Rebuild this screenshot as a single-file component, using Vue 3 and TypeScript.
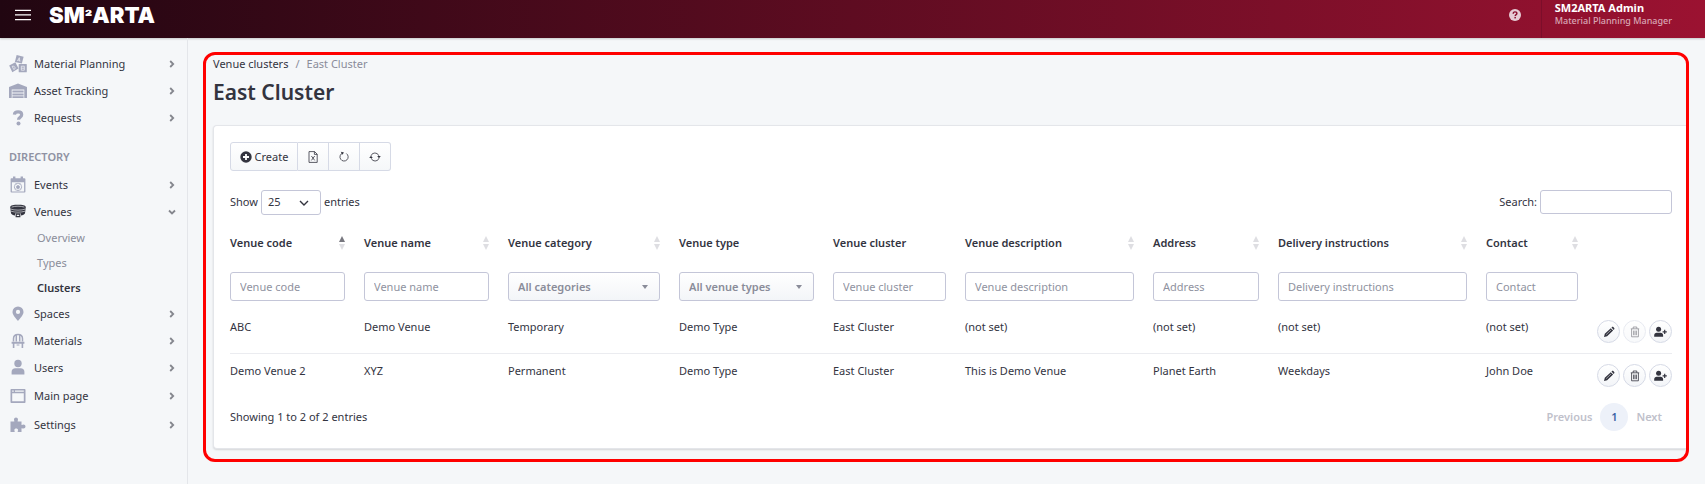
<script setup lang="ts">
import { ref } from 'vue'

interface NavItem {
  label: string
  icon: string
  open?: boolean
  tall?: boolean
}
interface Column {
  key: string
  label: string
  width: number
  sort: '' | 'both' | 'asc'
  options?: string
}
interface Venue {
  cells: string[]
  locked: boolean
}

const topItems: NavItem[] = [
  { label: 'Material Planning', icon: 'blocks' },
  { label: 'Asset Tracking', icon: 'warehouse' },
  { label: 'Requests', icon: 'question' },
]
const directoryItems: NavItem[] = [
  { label: 'Events', icon: 'calendar' },
  { label: 'Venues', icon: 'stadium', open: true },
  { label: 'Spaces', icon: 'pin' },
  { label: 'Materials', icon: 'chair' },
  { label: 'Users', icon: 'user' },
  { label: 'Main page', icon: 'window', tall: true },
  { label: 'Settings', icon: 'puzzle', tall: true },
]
const groups = [
  { title: '', items: topItems },
  { title: 'DIRECTORY', items: directoryItems },
]
const venueLinks = ['Overview', 'Types', 'Clusters']

const columns: Column[] = [
  { key: 'code', label: 'Venue code', width: 134, sort: 'asc' },
  { key: 'name', label: 'Venue name', width: 144, sort: 'both' },
  { key: 'category', label: 'Venue category', width: 171, sort: 'both', options: 'All categories' },
  { key: 'type', label: 'Venue type', width: 154, sort: '', options: 'All venue types' },
  { key: 'cluster', label: 'Venue cluster', width: 132, sort: '' },
  { key: 'description', label: 'Venue description', width: 188, sort: 'both' },
  { key: 'address', label: 'Address', width: 125, sort: 'both' },
  { key: 'delivery', label: 'Delivery instructions', width: 208, sort: 'both' },
  { key: 'contact', label: 'Contact', width: 111, sort: 'both' },
]
const venues: Venue[] = [
  {
    cells: ['ABC', 'Demo Venue', 'Temporary', 'Demo Type', 'East Cluster', '(not set)', '(not set)', '(not set)', '(not set)'],
    locked: true,
  },
  {
    cells: ['Demo Venue 2', 'XYZ', 'Permanent', 'Demo Type', 'East Cluster', 'This is Demo Venue', 'Planet Earth', 'Weekdays', 'John Doe'],
    locked: false,
  },
]
const pageSize = ref('25')
const search = ref('')
</script>

<template>
  <div class="page">
    <header class="topbar">
      <button class="burger" type="button" aria-label="Toggle menu">
        <svg viewBox="0 0 16 12" width="16" height="12" stroke="#fff" stroke-width="1.300">
          <path d="M0 1.300h16M0 5.800h16M0 10.700h16" />
        </svg>
      </button>
      <a class="logo" href="#">SM<span>²</span>ARTA</a>
      <a class="help" href="#" aria-label="Help">
        <svg viewBox="0 0 12 12" width="12" height="12">
          <circle cx="6" cy="6" r="6" fill="#e6cdd5" />
          <path d="M4.200 4.700C4.200 3.500 5 2.900 6 2.900s1.900.6 1.900 1.600C7.900 5.700 6.200 5.600 6.200 7" fill="none" stroke="#880f2d" stroke-width="1.400" />
          <rect x="5.400" y="7.900" width="1.500" height="1.500" fill="#880f2d" />
        </svg>
      </a>
      <div class="account">
        <strong>SM2ARTA Admin</strong>
        <span>Material Planning Manager</span>
      </div>
    </header>

    <div class="body">
      <nav class="sidebar" aria-label="Main">
        <template v-for="group in groups" :key="group.title">
          <h2 v-if="group.title">{{ group.title }}</h2>
          <ul>
            <li v-for="item in group.items" :key="item.label">
              <a class="item" :class="{ open: item.open, tall: item.tall }" href="#">
                <svg class="icon" viewBox="0 0 18 18" width="18" height="18" fill="currentColor">
                  <g v-if="item.icon === 'blocks'">
                    <path d="M7.600.1l7 1.700-1.700 6.800-7-1.700z" />
                    <path d="M.2 10.400l6.200-3.200 3.100 6.400-6.200 3.600z" />
                    <rect x="9.700" y="8.900" width="8.100" height="8.400" rx=".6" />
                    <path d="M8.400 6l1.900-3.300.6 3.900M9 5l1.700.4M3.200 11.300l1.600 3.300c2.200-.6 1.600-4-1.600-3.300zM12.300 11.200v4h3v-4zM12.300 13.200h3" fill="none" stroke="#f5f7f9" stroke-width=".7" />
                  </g>
                  <g v-else-if="item.icon === 'warehouse'">
                    <path d="M-.5 5.200L9 1.600l9.500 3.600V16h-3.200V7.600H2.700V16H-.5z" />
                    <path d="M3.400 8.600h11.200v2H3.400zM3.400 11.400h11.200v2H3.400zM3.400 14.200h11.200V16H3.400z" />
                  </g>
                  <g v-else-if="item.icon === 'question'">
                    <path d="M5.400 5.600C5.600 3.600 7 2.900 9.100 2.900s3.600 1 3.600 2.800c0 2.500-3.200 2.400-3.200 5.100" fill="none" stroke="currentColor" stroke-width="3.200" />
                    <circle cx="9.500" cy="14.400" r="2" />
                  </g>
                  <g v-else-if="item.icon === 'calendar'">
                    <path fill-rule="evenodd" d="M2.800 2.200H4V.6h2.400v1.600h5.200V.6H14v1.600h1.200c.8 0 1.200.300 1.200.8v12.700c0 .5-.3.800-.8.800H2.400c-.5 0-.8-.3-.8-.8V3c0-.5.3-.8 1.200-.8zM2.900 6.300v9.100h12.200V6.300z" />
                    <circle cx="9" cy="10.900" r="3.700" fill="none" stroke="currentColor" stroke-width=".8" />
                    <path d="M9 9.300l1.700 1.200-.6 1.900H7.900l-.6-1.900zM6.500 7.900l1.300.2M11.500 7.900l-1.300.2M5.400 11.500l1 1M12.600 11.500l-1 1M9 14.600v-1" stroke="currentColor" stroke-width=".7" />
                  </g>
                  <g v-else-if="item.icon === 'stadium'">
                    <path d="M1.200 4.300C1.200 2.400 4.800 1.800 9 1.800s7.800.6 7.800 2.500L16 10.200c-.3 1.300-2.300 2-4 2.200v-2H6v2c-1.700-.2-3.700-.9-4-2.200z" />
                    <path d="M2.600 4.100c3.500-1.200 9.300-1.200 12.800 0M1.500 6c4 1.500 11 1.500 15 0M2 8.200c4 1.300 10 1.300 14 0" fill="none" stroke="#f5f7f9" stroke-width=".6" />
                    <path d="M7.200 11.200h3.600v2.400H7.200z" fill="none" stroke="currentColor" stroke-width="1.200" />
                  </g>
                  <path v-else-if="item.icon === 'pin'" fill-rule="evenodd" d="M9 1.500a5.500 5.500 0 0 1 5.500 5.500c0 3-3.500 6.400-5.500 9C7 13.400 3.500 10 3.500 7A5.500 5.500 0 0 1 9 1.500zM9 4.800a2.100 2.100 0 1 0 0 4.200 2.100 2.100 0 0 0 0-4.200z" />
                  <g v-else-if="item.icon === 'chair'">
                    <path d="M4.500 9.500V6.800C4.500 3.800 6.300 2.600 9 2.600s4.500 1.200 4.500 4.200v2.700M7.300 9.500V3.500M10.700 9.500V3.500" fill="none" stroke="currentColor" stroke-width="1.500" />
                    <path d="M2.600 9.800h12.800v2H2.600zM3.800 11.800h1.600V16H3.800zM12.600 11.800h1.600V16h-1.600zM7.600 12.600h2.800v1H7.600z" />
                  </g>
                  <g v-else-if="item.icon === 'user'">
                    <circle cx="9" cy="4.500" r="3.700" />
                    <path d="M2.600 15.400v-2.700c0-2.200 1.500-3.500 3.700-3.500h5.400c2.200 0 3.700 1.300 3.700 3.500v2.700z" />
                  </g>
                  <path v-else-if="item.icon === 'window'" fill-rule="evenodd" d="M2.500 2h13c.6 0 1 .4 1 1v12c0 .6-.4 1-1 1h-13c-.6 0-1-.4-1-1V3c0-.6.4-1 1-1zM3.200 6.300v8h11.600v-8zM3.200 3.500v1.300h1.500V3.500zM6 3.500v1.300h8.800V3.500z" />
                  <path v-else d="M1.500 5.500h3.700c.5-.4-.2-1-.2-2 0-1.200.9-2 2-2s2 .8 2 2c0 1-.7 1.600-.2 2h3.700v3.300c.5.6 1.100-.2 2-.2 1.100 0 2 .9 2 2s-.9 2-2 2c-.9 0-1.500-.8-2-.2V16H8.900c-.6-.5.2-1.100.2-1.900 0-1-.9-1.600-1.900-1.600s-1.900.6-1.900 1.600c0 .8.800 1.400.2 1.900h-4z" />
                </svg>
                <span>{{ item.label }}</span>
                <svg class="chev" viewBox="0 0 8 8" width="8" height="8" fill="none" stroke="#85878e" stroke-width="1.800">
                  <path :d="item.open ? 'M1 2.500l3 3 3-3' : 'M2.200 1l3 3-3 3'" />
                </svg>
              </a>
              <ul v-if="item.open" class="sub">
                <li v-for="link in venueLinks" :key="link">
                  <a href="#" :class="{ current: link === 'Clusters' }">{{ link }}</a>
                </li>
              </ul>
            </li>
          </ul>
        </template>
      </nav>

      <main class="content">
        <nav class="crumbs" aria-label="Breadcrumb">
          <a href="#">Venue clusters</a><i>/</i><span>East Cluster</span>
        </nav>
        <h1>East Cluster</h1>

        <section class="card">
          <div class="toolbar">
            <button class="create" type="button">
              <svg viewBox="0 0 12 12" width="12" height="12">
                <circle cx="6" cy="6" r="5.700" fill="#33343f" />
                <path d="M6 3v6M3 6h6" stroke="#fff" stroke-width="1.800" />
              </svg>
              Create
            </button>
            <button type="button" aria-label="Export to Excel">
              <svg viewBox="0 0 12 12" width="12" height="12" fill="none" stroke="#33343f" stroke-width=".8">
                <path d="M2 .6h5.600L10.200 3.200v8.200H2zM7.400.6v2.800h2.800M4.400 5l3.300 4.400M7.700 5L4.400 9.400" />
              </svg>
            </button>
            <button type="button" aria-label="Reset">
              <svg viewBox="0 0 12 12" width="12" height="12" fill="none" stroke="#33343f">
                <path d="M4.600 2.100A4.100 4.100 0 1 0 8.300 2.500" stroke-width=".8" />
                <path d="M2.800.8l3.200.6-1.600 2.300z" fill="#33343f" stroke="none" />
              </svg>
            </button>
            <button type="button" aria-label="Refresh">
              <svg viewBox="0 0 12 12" width="12" height="12" fill="none" stroke="#33343f">
                <path d="M2 4.800A4.100 4.100 0 0 1 9.800 4.800M10 7.200A4.100 4.100 0 0 1 2.200 7.200" stroke-width=".8" />
                <path d="M8.200 5h3.600L10 7.200zM.2 7h3.600L2 4.800z" fill="#33343f" stroke="none" />
              </svg>
            </button>
          </div>

          <div class="controls">
            <label>
              Show
              <span class="pick size">
                <select v-model="pageSize"><option>25</option></select>
                <svg viewBox="0 0 10 10" width="10" height="10" fill="none" stroke="#33343f" stroke-width="1.400"><path d="M1 3l4 4 4-4" /></svg>
              </span>
              entries
            </label>
            <label>Search: <input v-model="search" class="search" type="search" /></label>
          </div>

          <table>
            <colgroup>
              <col v-for="c in columns" :key="c.key" :style="{ width: c.width + 'px' }" />
              <col class="actions-col" />
            </colgroup>
            <thead>
              <tr class="titles">
                <th v-for="c in columns" :key="c.key" scope="col">
                  <div>
                    {{ c.label }}
                    <svg v-if="c.sort" viewBox="0 0 6 14" width="6" height="14">
                      <path d="M3 0l3 6H0z" :fill="c.sort === 'asc' ? '#77777f' : '#dedee2'" />
                      <path d="M3 14l3-6H0z" fill="#dedee2" />
                    </svg>
                  </div>
                </th>
                <td></td>
              </tr>
              <tr class="filters">
                <td v-for="c in columns" :key="c.key">
                  <span v-if="c.options" class="pick">
                    <select :aria-label="c.label"><option>{{ c.options }}</option></select>
                    <svg viewBox="0 0 6 4" width="6" height="4"><path d="M0 0h6L3 4z" fill="#8a8c99" /></svg>
                  </span>
                  <input v-else type="text" :placeholder="c.label" :aria-label="c.label" />
                </td>
                <td></td>
              </tr>
            </thead>
            <tbody>
              <tr v-for="venue in venues" :key="venue.cells[0]">
                <td v-for="(cell, i) in venue.cells" :key="i">{{ cell }}</td>
                <td class="actions">
                  <div>
                    <button type="button" aria-label="Edit">
                      <svg viewBox="0 0 12 12" width="12" height="12" fill="#33343f">
                        <path d="M1 11l.8-3.200 6-5.600 2.300 2.400-6 5.600zM8.500 1.600l.5-.5c.4-.4.9-.4 1.300 0l.9.9c.4.4.4.9 0 1.300l-.5.6z" />
                        <path d="M3.200 8.600l5-4.800" stroke="#fff" stroke-width=".5" />
                      </svg>
                    </button>
                    <button type="button" aria-label="Delete" :disabled="venue.locked">
                      <svg viewBox="0 0 12 12" width="12" height="12" fill="none" stroke="#33343f">
                        <path d="M1.800 2.800h8.400M4.200 2.600V1h3.600v1.600M2.600 3v7.800h6.800V3M4.600 4.600v4.600M6 4.600v4.600M7.400 4.600v4.600" stroke-width=".8" />
                      </svg>
                    </button>
                    <button type="button" aria-label="Add user">
                      <svg viewBox="0 0 13 12" width="13" height="12" fill="#33343f">
                        <circle cx="4.600" cy="3.200" r="2.500" />
                        <path d="M.2 10.800V9.300c0-1.600 1-2.600 2.500-2.600h3.900c1.500 0 2.500 1 2.500 2.600v1.500zM10.100 3.800h1.200v1.500h1.500v1.200h-1.500V8h-1.200V6.500H8.600V5.300h1.500z" />
                      </svg>
                    </button>
                  </div>
                </td>
              </tr>
            </tbody>
          </table>

          <footer class="foot">
            <span>Showing 1 to 2 of 2 entries</span>
            <div class="pager">
              <button type="button" disabled>Previous</button>
              <button class="on" type="button">1</button>
              <button type="button" disabled>Next</button>
            </div>
          </footer>
        </section>
      </main>
    </div>
  </div>
</template>

<style>
body {
  background: #f5f7f9;
}
</style>

<style scoped>
.page {
  min-height: 100vh;
  font: 11px/16px 'Noto Sans', 'Open Sans', sans-serif;
  color: #33343f;
  background: #f5f7f9;
  display: flex;
  flex-direction: column;
}
.page * {
  box-sizing: border-box;
}
a {
  color: inherit;
  text-decoration: none;
}
ul {
  list-style: none;
  margin: 0;
  padding: 0;
}
button,
input,
select {
  font: inherit;
  color: inherit;
  margin: 0;
}
svg {
  display: block;
  flex: none;
}

.topbar {
  height: 38px;
  display: flex;
  align-items: center;
  background: linear-gradient(90deg, #210611, #9b1231);
  box-shadow: 0 1px 2px #0003;
  color: #fff;
  padding: 0 33px 0 15px;
}
.burger {
  padding: 0;
  border: 0;
  background: none;
  margin-bottom: 8px;
}
.logo {
  font: 900 22px/24px Inter, sans-serif;
  margin: 0 auto 6px 18px;
}
.logo span {
  font-size: 16px;
}
.help {
  margin-bottom: 8px;
}
.account {
  align-self: stretch;
  margin-left: 20px;
  border-left: 1px solid #7c0e2a;
  padding: 1px 0 0 13px;
  display: flex;
  flex-direction: column;
}
.account strong {
  line-height: 14px;
}
.account span {
  font-size: 9px;
  font-weight: 500;
  line-height: 12px;
  color: #d9a6b4;
}

.body {
  flex: 1;
  display: flex;
}
.sidebar {
  width: 188px;
  flex: none;
  padding-top: 12px;
  border-right: 1px solid #e4e6ea;
}
.sidebar h2 {
  margin: 18px 0 6px 9px;
  font-size: 11px;
  line-height: 16px;
  font-weight: 600;
  color: #8f92a3;
}
.item {
  height: 27px;
  display: flex;
  align-items: center;
  padding: 0 11px 0 9px;
}
.item.tall {
  height: 29px;
}
.item span {
  flex: 1;
  margin-left: 7px;
}
.icon {
  color: #a4a8bd;
}
.open .icon {
  color: #33343f;
}
.sub a {
  display: block;
  padding-left: 37px;
  line-height: 25px;
  color: #8a8c99;
}
.sub a.current {
  color: #33343f;
  font-weight: 600;
}

.content {
  flex: 1;
  min-width: 0;
  align-self: flex-start;
  margin: 14px 16px 22px 15px;
  border: 3px solid #f00;
  border-radius: 12px;
  padding: 1px 0 10px 7px;
}
.crumbs {
  display: flex;
  gap: 7px;
}
.crumbs i,
.crumbs span {
  color: #8a8c99;
  font-style: normal;
}
h1 {
  margin: 4px 0 17px;
  font-size: 21px;
  line-height: 32px;
  font-weight: 600;
}
.card {
  background: #fff;
  border: 1px solid #e4e6ea;
  border-right: 0;
  border-radius: 4px 0 0 4px;
  box-shadow: 0 1px 2px #0002;
  padding: 16px 14px 17px 16px;
}
.toolbar {
  display: flex;
}
.toolbar button {
  width: 31px;
  height: 29px;
  border: 1px solid #d6dae6;
  border-left-width: 0;
  padding: 0;
  display: flex;
  align-items: center;
  justify-content: center;
  gap: 3px;
  background: linear-gradient(#fff, #f5f7f9);
}
.toolbar .create {
  width: 68px;
  border-left-width: 1px;
  border-radius: 3px 0 0 3px;
}
.toolbar button:last-child {
  border-radius: 0 3px 3px 0;
}
.controls {
  margin-top: 18px;
  display: flex;
  justify-content: space-between;
}
.controls label {
  display: flex;
  align-items: center;
  gap: 3px;
  height: 26px;
}
.pick {
  position: relative;
  display: block;
}
.pick select {
  width: 100%;
  height: 29px;
  appearance: none;
  border: 1px solid #c4c6d8;
  border-radius: 3px;
  background: linear-gradient(#fff, #f3f5f8);
  padding: 0 9px;
  font-weight: 600;
  color: #8a8c99;
}
.pick svg {
  position: absolute;
  right: 12px;
  top: 13px;
  pointer-events: none;
}
.size {
  width: 60px;
}
.size select {
  height: 25px;
  background: #fff;
  font-weight: 400;
  color: inherit;
  padding: 0 6px;
}
.size svg {
  top: 8px;
}
.search,
.filters input {
  border: 1px solid #c4c6d8;
  border-radius: 3px;
  background: #fff;
}
.search {
  width: 132px;
  height: 24px;
}
table {
  width: 100%;
  table-layout: fixed;
  border-collapse: separate;
  border-spacing: 0;
}
.actions-col {
  width: 75px;
}
th,
td {
  text-align: left;
  vertical-align: top;
  padding: 0 19px 0 0;
}
.titles th {
  padding-top: 20px;
  padding-bottom: 11px;
  font-weight: 600;
  white-space: nowrap;
}
.titles div {
  display: flex;
  justify-content: space-between;
  align-items: center;
}
.filters td {
  padding-top: 10px;
  padding-bottom: 9px;
}
.filters input {
  display: block;
  width: 100%;
  height: 29px;
  padding: 0 9px;
}
.filters input::placeholder {
  color: #8f92a0;
  opacity: 1;
}
tbody td {
  padding-top: 9px;
  height: 44px;
  white-space: nowrap;
  border-bottom: 1px solid #ebecf0;
}
tbody tr:last-child td {
  border-bottom: 0;
}
tbody .actions {
  padding: 10px 0 0;
}
.actions div {
  display: flex;
  justify-content: flex-end;
  gap: 3px;
}
.actions button {
  width: 23px;
  height: 23px;
  padding: 0;
  display: grid;
  place-items: center;
  border: 1px solid #d6dae6;
  border-radius: 50%;
  background: linear-gradient(#fff, #f3f5f8);
}
.actions button:disabled {
  opacity: 0.55;
}
.foot {
  margin-top: 5px;
  display: flex;
  align-items: center;
  justify-content: space-between;
}
.pager {
  display: flex;
  gap: 8px;
  padding-right: 10px;
}
.pager button {
  border: 0;
  padding: 0;
  background: none;
  height: 28px;
  font-weight: 600;
  color: #bfc1cb;
}
.pager .on {
  width: 28px;
  border-radius: 50%;
  background: #edf1f9;
  color: #3d62a5;
}
</style>
